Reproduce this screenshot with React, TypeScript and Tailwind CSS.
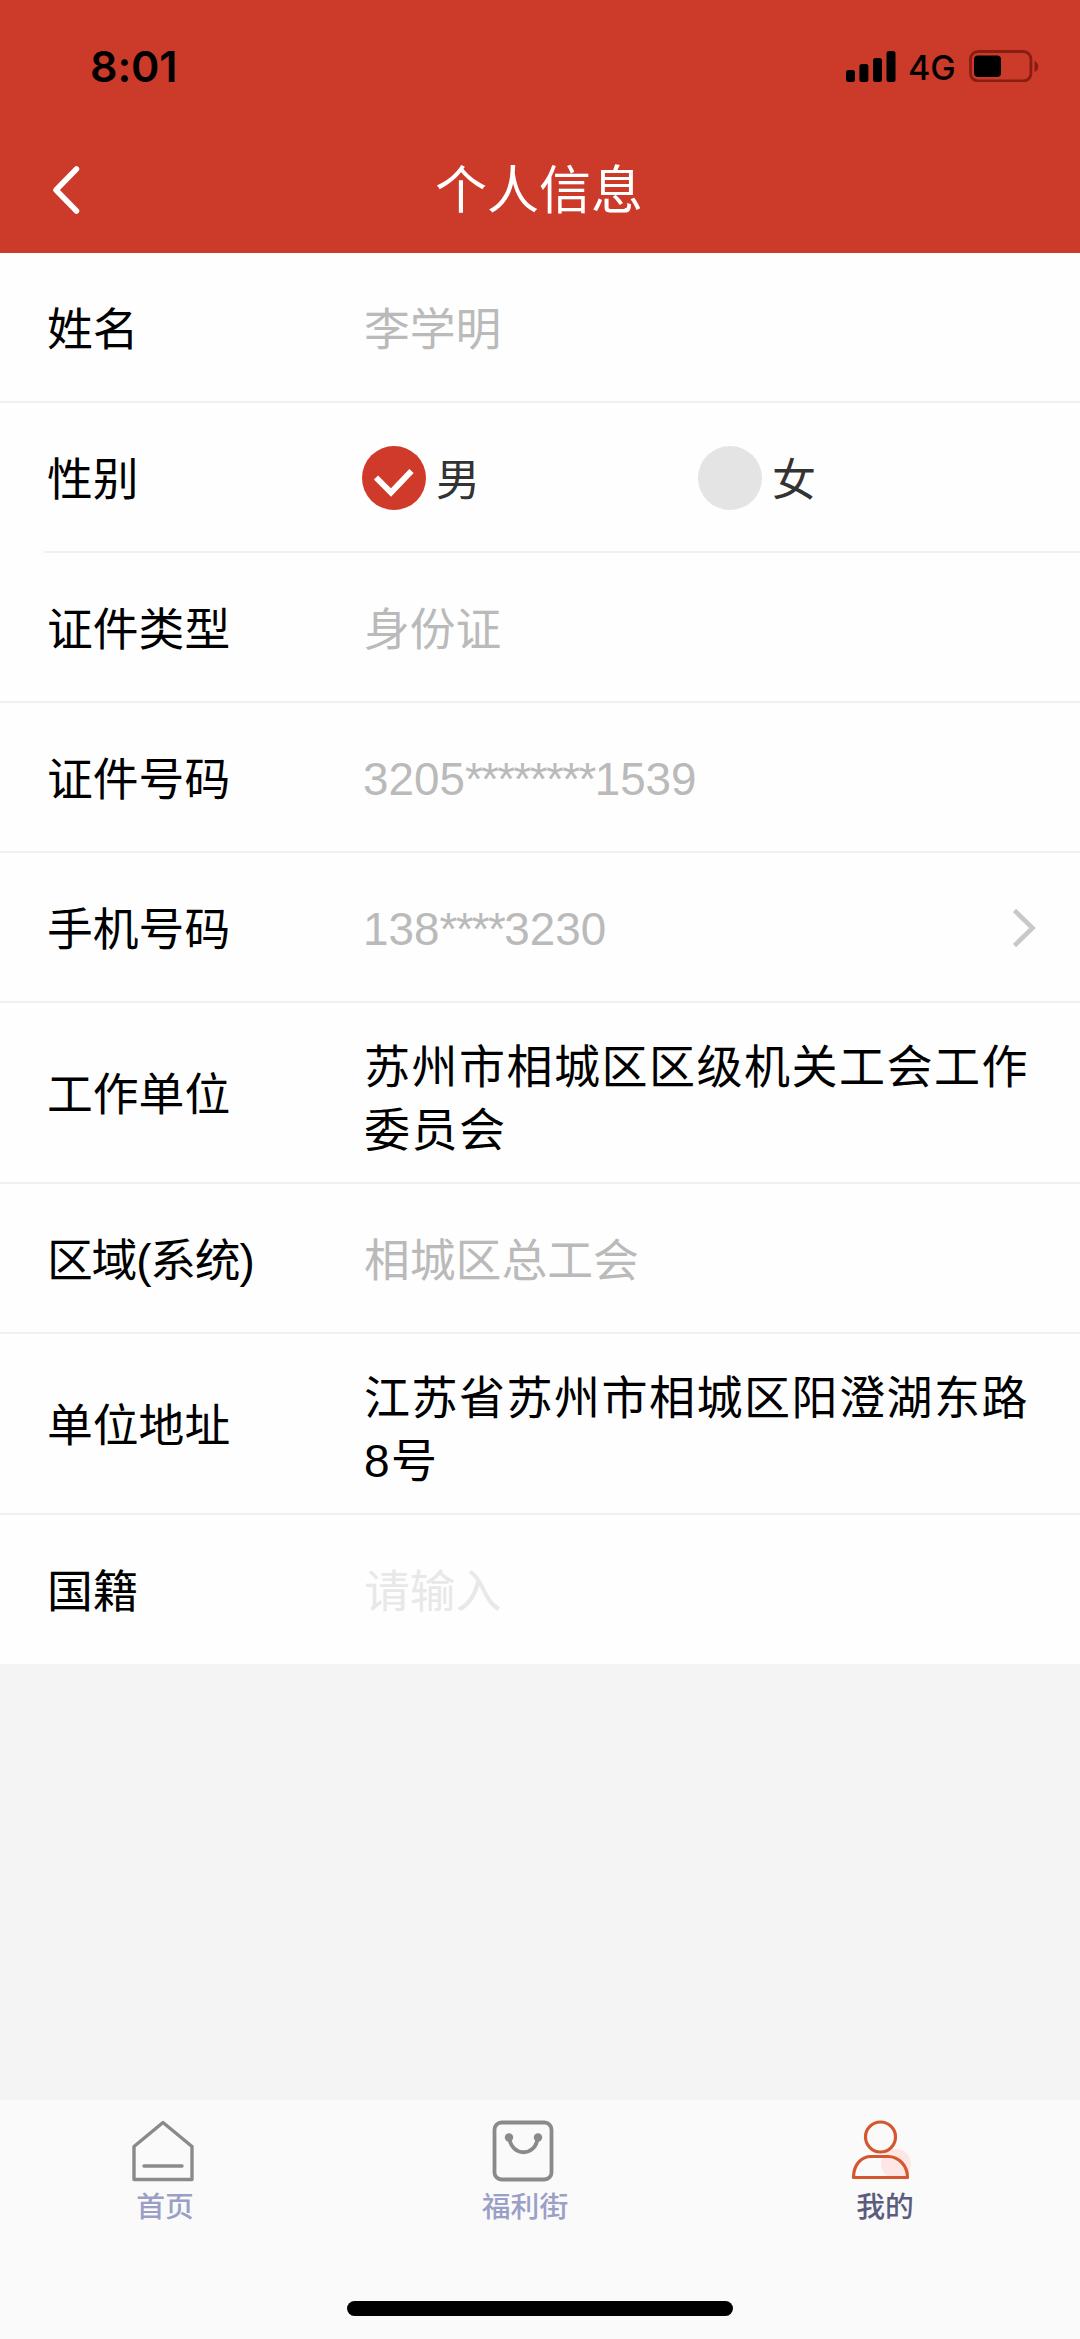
import { useState, type ReactNode } from 'react';

type Gender = 'male' | 'female';

interface RowProps {
  label: ReactNode;
  tall?: boolean;
  inset?: boolean;
  last?: boolean;
  arrow?: boolean;
  children: ReactNode;
}

function StatusBar() {
  return (
    <div className="flex h-[132px] items-start justify-between pl-[90px] pr-[40px] text-black">
      <span className="mt-[40px] font-['Inter'] text-[43px] font-semibold leading-[52px] tracking-[-0.1px]">
        8:01
      </span>
      <div className="mt-[50px] flex h-8 items-center">
        <svg width="50" height="32" viewBox="0 0 50 32">
          <rect x="0" y="20" width="9" height="12" rx="2.5" />
          <rect x="13.4" y="14" width="9" height="18" rx="2.5" />
          <rect x="27" y="8" width="9" height="24" rx="2.5" />
          <rect x="40.5" y="1" width="9" height="31" rx="2.5" />
        </svg>
        <span className="ml-[12px] mt-[3px] w-[46px] font-['Inter'] text-[34px] font-medium leading-[34px]">4G</span>
        <svg className="ml-[15px]" width="71" height="32" viewBox="0 0 71 32">
          <rect x="1.5" y="1.5" width="60.4" height="29.4" rx="7.5" fill="none" stroke="#8a1d12" strokeWidth="2.8" />
          <rect x="5" y="5.5" width="27" height="21.5" rx="4" />
          <path d="M65.5 11 C70.5 12.5 70.5 20.5 65.5 22 Z" fill="#8a1d12" />
        </svg>
      </div>
    </div>
  );
}

function Header() {
  return (
    <header className="h-[253px] bg-[#cc3a29]">
      <StatusBar />
      <div className="flex h-[118px] items-center">
        <button type="button" className="w-[160px] pb-[2px] pl-[51px]">
          <svg width="30" height="50" viewBox="0 0 30 50" fill="none" stroke="#fff" strokeWidth="5.5" strokeLinecap="round" strokeLinejoin="round">
            <path d="M25.5 4 L5 25 L25.5 46" />
          </svg>
        </button>
        <h1 className="w-[758px] text-center text-[52px] leading-[60px] text-white">个人信息</h1>
      </div>
    </header>
  );
}

function Row({ label, tall, inset, last, arrow, children }: RowProps) {
  return (
    <div className={tall ? 'h-[181px]' : last ? 'h-[149px]' : 'h-[150px]'}>
      <div className={`flex items-center pl-[47px] ${tall ? 'h-[179px]' : 'h-[148px]'}`}>
        <div className="w-[316px] pt-[8px] text-[45.8px] text-black">{label}</div>
        <div className="flex-1">{children}</div>
        {arrow && (
          <svg className="mr-[43px] mt-[2px]" width="24" height="40" viewBox="0 0 24 40" fill="none" stroke="#c8c8c8" strokeWidth="4.6">
            <path d="M1.5 2.5 L19.5 20 L1.5 37.5" />
          </svg>
        )}
      </div>
      {!last && <div className={`h-[2px] bg-[#f0f0f0] ${inset ? 'ml-[44px]' : ''}`} />}
    </div>
  );
}

function Muted({ children }: { children: ReactNode }) {
  return <div className="pl-px pt-[8px] text-[45.8px] text-[#bababa]">{children}</div>;
}

// 脱敏号码：中间的星号间距略紧
function MaskedNumber({ head, stars, tail }: { head: string; stars: number; tail: string }) {
  return (
    <div className="pt-[6px] text-[45.8px] text-[#bababa]">
      {head}
      <span className="tracking-[-1.6px]">{'*'.repeat(stars)}</span>
      {tail}
    </div>
  );
}

function LongText({ children }: { children: ReactNode }) {
  return (
    <p className="w-[690px] pl-px pt-[13px] text-[46px] leading-[63px] tracking-[1.5px] text-black">{children}</p>
  );
}

function Radio({ label, checked, onSelect }: { label: string; checked: boolean; onSelect: () => void }) {
  return (
    <button type="button" onClick={onSelect} className="flex w-[336px] items-center text-[44px] text-[#333]">
      <svg className="-ml-px mr-[10px]" width="64" height="64" viewBox="0 0 64 64">
        <circle cx="32" cy="32" r="32" fill={checked ? '#cf3a2a' : '#e4e4e4'} />
        {checked && <path d="M14 31.5 L29 46.5 L49.5 25" fill="none" stroke="#fff" strokeWidth="6" />}
      </svg>
      <span className="pt-[6px] leading-[58px]">{label}</span>
    </button>
  );
}

function HomeIcon() {
  return (
    <svg width="62" height="62" viewBox="0 0 62 62" fill="none" stroke="#8a8a8a" strokeWidth="3.4" strokeLinejoin="round" strokeLinecap="round">
      <path d="M2 59.5 V26.5 L31 2.5 L60 26.5 V59.5 Z" />
      <path d="M12 46 H50" />
    </svg>
  );
}

function BagIcon() {
  return (
    <svg width="62" height="62" viewBox="0 0 62 62" fill="none" stroke="#8a8a8a" strokeWidth="3.8">
      <rect x="2.5" y="2.5" width="57" height="57" rx="7" />
      <path d="M17.5 18 C19 37 44 37 45.5 18" />
      <circle cx="17" cy="17.5" r="4.2" fill="#8a8a8a" stroke="none" />
      <circle cx="46" cy="17.5" r="4.2" fill="#8a8a8a" stroke="none" />
    </svg>
  );
}

function UserIcon() {
  return (
    <svg width="66" height="62" viewBox="0 0 66 62" fill="none" stroke="#d4572f" strokeWidth="3.2">
      <circle cx="46" cy="44" r="15" fill="#fde6e4" stroke="none" />
      <circle cx="30.5" cy="17" r="15" />
      <path d="M3.5 57.5 C3.5 44 12 36.5 21 36.5 H38 C49 36.5 57.5 46 57.5 57.5 Z" strokeLinejoin="round" />
    </svg>
  );
}

const TABS = [
  { name: '首页', icon: <HomeIcon />, active: false },
  { name: '福利街', icon: <BagIcon />, active: false },
  { name: '我的', icon: <UserIcon />, active: true },
];

function TabBar() {
  return (
    <nav className="flex h-[239px] flex-col bg-[#fafafa]">
      <div className="flex h-[201px] pt-[20px]">
        {TABS.map((tab) => (
          <button key={tab.name} type="button" className="flex w-[360px] flex-col items-center pr-[30px]">
            <span className="-ml-[5px]">{tab.icon}</span>
            <span
              className={`mt-[5px] text-[28.8px] font-medium leading-[40px] ${
                tab.active ? 'text-[#5a5d7e]' : 'text-[#9b9fc6]'
              }`}
            >
              {tab.name}
            </span>
          </button>
        ))}
      </div>
      <div className="mx-auto h-[15px] w-[386px] rounded-full bg-black" />
    </nav>
  );
}

export default function App() {
  const [gender, setGender] = useState<Gender>('male');

  return (
    <div className="flex h-[2339px] w-[1080px] flex-col overflow-hidden bg-[#f4f4f4] font-['Liberation_Sans','Noto_Sans_CJK_SC',sans-serif]">
      <Header />
      <main className="flex-1">
        <div className="bg-[#fefefe]">
          <Row label="姓名">
            <Muted>李学明</Muted>
          </Row>
          <Row label="性别" inset>
            <div className="flex pt-[2px]">
              <Radio label="男" checked={gender === 'male'} onSelect={() => setGender('male')} />
              <Radio label="女" checked={gender === 'female'} onSelect={() => setGender('female')} />
            </div>
          </Row>
          <Row label="证件类型">
            <Muted>身份证</Muted>
          </Row>
          <Row label="证件号码">
            <MaskedNumber head="3205" stars={8} tail="1539" />
          </Row>
          <Row label="手机号码" arrow>
            <MaskedNumber head="138" stars={4} tail="3230" />
          </Row>
          <Row label="工作单位" tall>
            <LongText>苏州市相城区区级机关工会工作委员会</LongText>
          </Row>
          <Row label={<span className="tracking-[-1.2px]">区域(系统)</span>}>
            <Muted>相城区总工会</Muted>
          </Row>
          <Row label="单位地址" tall>
            <LongText>江苏省苏州市相城区阳澄湖东路8号</LongText>
          </Row>
          <Row label="国籍" last>
            <div className="pl-px pt-[8px] text-[45.8px] text-[#e8e8e8]">请输入</div>
          </Row>
        </div>
      </main>
      <TabBar />
    </div>
  );
}
